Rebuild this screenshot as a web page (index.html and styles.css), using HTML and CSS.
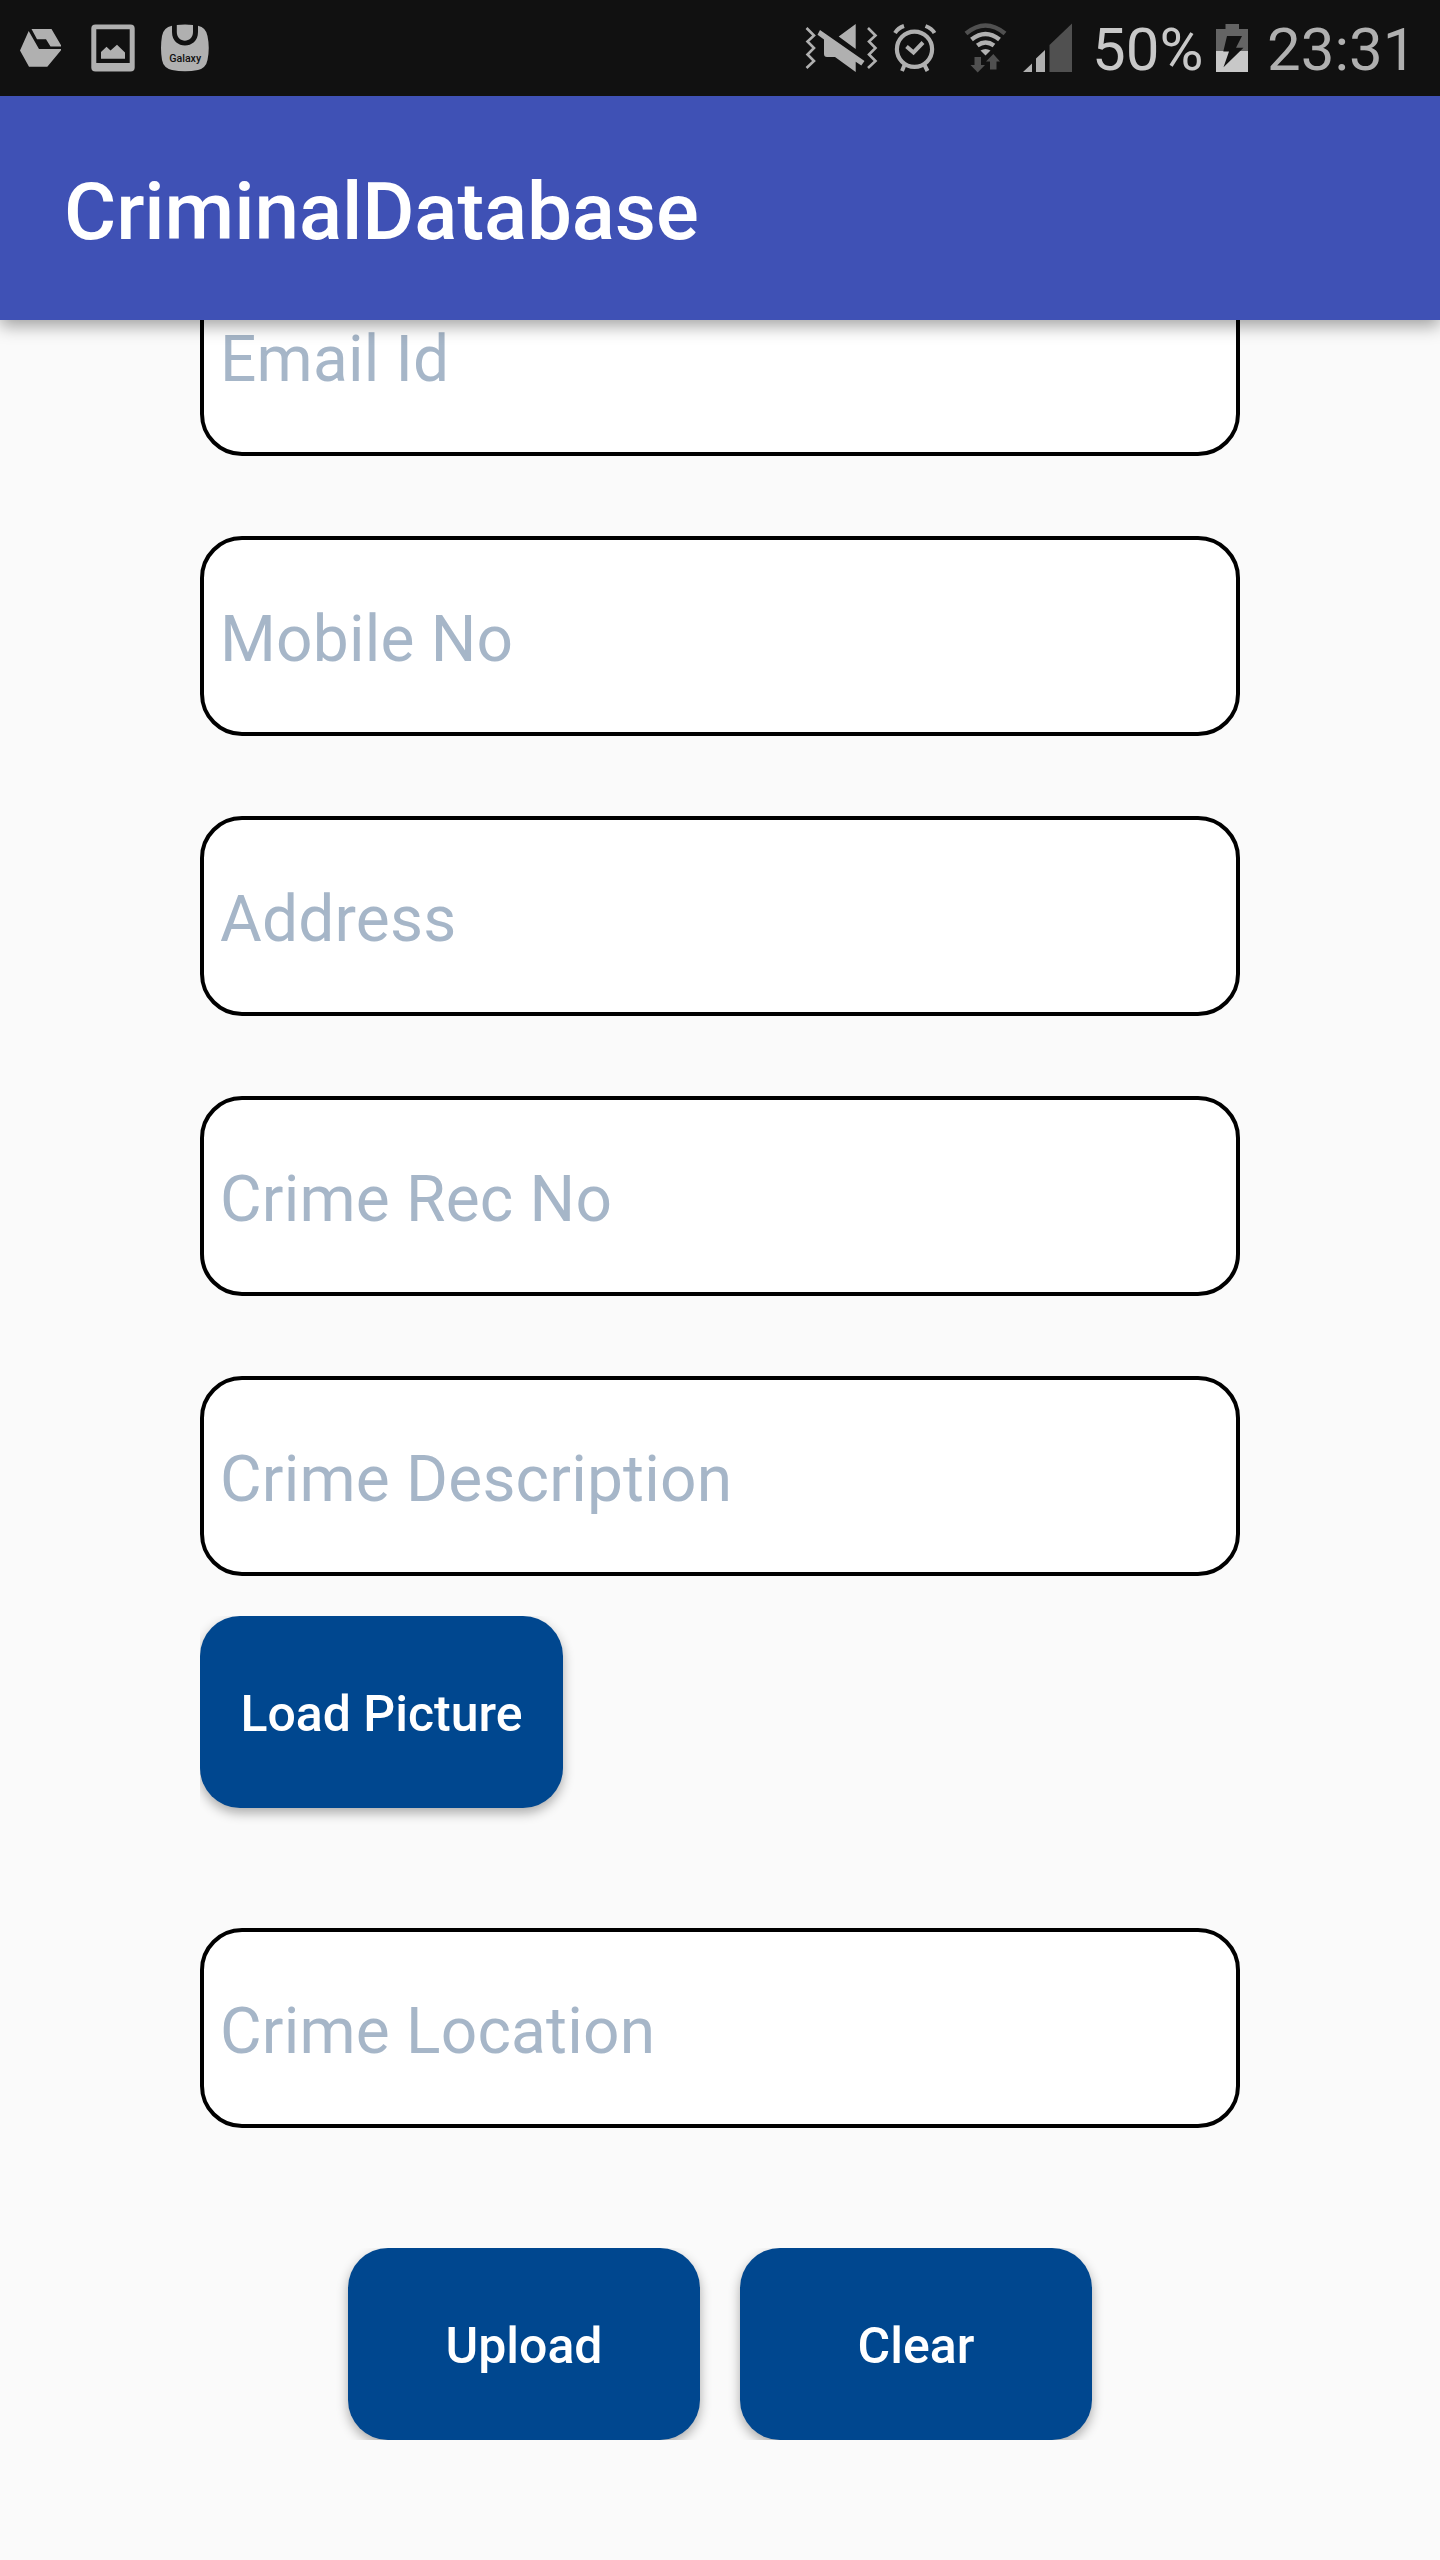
FILE: index.html
```html
<!DOCTYPE html>
<html lang="en">
<head>
<meta charset="utf-8">
<title>CriminalDatabase</title>
<link rel="stylesheet" href="styles.css">
</head>
<body>
<div class="screen">
  <header class="status-bar">
    <div class="notifications">
      <svg width="42" height="48" viewBox="20 24 42 48"><path fill="#b0b0b0" d="M28.700 31L39 49L61 49L61 50.300L47.300 66.700L29 66.700L20 50.500ZM31.500 29L51.500 29L61 45.300V46.500H50.500L46 39.200H37Z"/></svg>
      <svg width="44" height="48" viewBox="91 24 44 48"><path fill="#b0b0b0" fill-rule="evenodd" d="M95.500 24.500H130.500Q134.700 24.500 134.700 28.500V67.500Q134.700 71.500 130.500 71.500H95.500Q91.300 71.500 91.300 67.500V28.500Q91.300 24.500 95.500 24.500ZM96.300 29.300V63H129.700V29.300ZM101 58.700V52L106.500 46.700L110.500 50.500L117 44.700L125 52.500V58.700Z"/></svg>
      <svg width="48" height="48" viewBox="161 24 48 48"><path fill="#b0b0b0" d="M172 25.800V32C172 50 198 50 198 32V25.800Q206 27.500 207.500 36Q210 48 207.500 60Q206 68 198 70Q185 72.500 172 70Q163.500 68 162 60Q160 48 162 36Q163.500 27.500 172 25.800ZM176.800 25Q185 23.800 193 25V32C193 43.500 176.800 43.500 176.800 32Z"/><text class="galaxy" x="185.200" y="61.500" text-anchor="middle" textLength="32" lengthAdjust="spacingAndGlyphs">Galaxy</text></svg>
    </div>
    <div class="indicators">
      <svg width="74" height="48" viewBox="804 24 74 48"><path fill="none" stroke="#b0b0b0" stroke-width="2.600" d="M806.500 28L814 35.500L807.500 41.500L814 48L807.500 54.500L814 61L806.500 68M868 28L875.500 35.500L869 41.500L875.500 48L869 54.500L875.500 61L868 68"/><path fill="#b0b0b0" d="M855.700 24V49L838.700 36.500ZM820 30L864.500 61L861.300 65.500L855.700 61.700V72L835 57H827Q824 57 824 54V39.500L817.500 34.700Z"/></svg>
      <svg class="alarm" width="44" height="48" viewBox="893 24 44 48"><g fill="none" stroke="#b0b0b0"><circle cx="914.500" cy="49.300" r="17.600" stroke-width="4.200"/><path stroke-width="4" d="M906.500 46.500L913.500 52.500L923 42.500M895 33Q898 28 904 26M925.500 26Q932 28.500 934.500 33M904.500 65L902 71M924.500 65L927.500 71"/></g></svg>
      <svg class="wifi" width="44" height="50" viewBox="964 23 44 50"><g fill="none" stroke-width="4.500"><path stroke="#505050" d="M966 33.500Q985.500 17.500 1005 33.500"/><path stroke="#b0b0b0" d="M971.500 39.500Q985.500 28.500 999.500 39.500M977.300 45.500Q985.500 39.500 994 45.500"/></g><path fill="#b0b0b0" d="M985.500 55.500L980.500 50.500Q985.500 47.500 990.500 50.500Z"/><path fill="#505050" d="M974.500 57H981V65H985L977.700 72.500L970.500 65H974.500ZM990 69.500V61.500H986L993.300 54L1000 61.500H996.500V69.500Z"/></svg>
      <svg class="signal" width="50" height="50" viewBox="1023 23 50 50"><path fill="#b0b0b0" d="M1023 72L1032 63.500V72ZM1036 72V58.500L1045 50V72Z"/><path fill="#505050" d="M1049.500 72V45L1072 23.500V72Z"/></svg>
      <span class="percent">50%</span>
      <svg class="battery" width="32" height="48" viewBox="1216 24 32 48"><path fill="#646464" d="M1216 29H1225.500V24H1239V29H1248V51H1216Z"/><path fill="#c8c8c8" d="M1216 51H1248V72H1216Z"/><path fill="#111" d="M1227 36H1242L1236 47.700H1243.500L1223.500 67.300L1229 51.500H1223.300Z"/></svg>
      <span class="clock">23:31</span>
    </div>
  </header>
  <div class="app-bar"><h1 class="title">CriminalDatabase</h1></div>
  <main class="form">
    <input class="field" type="text" placeholder="Email Id">
    <input class="field" type="text" placeholder="Mobile No">
    <input class="field" type="text" placeholder="Address">
    <input class="field" type="text" placeholder="Crime Rec No">
    <input class="field" type="text" placeholder="Crime Description">
    <div class="picture-row"><button class="button load">Load Picture</button></div>
    <input class="field" type="text" placeholder="Crime Location">
    <div class="actions">
      <button class="button">Upload</button>
      <button class="button">Clear</button>
    </div>
  </main>
</div>
</body>
</html>
```
FILE: styles.css
```css
* { box-sizing: border-box; }

body {
  margin: 0;
  background: #fafafa;
  font-family: Roboto, "Liberation Sans", sans-serif;
}

.screen {
  width: 1440px;
  height: 2560px;
  display: flex;
  flex-direction: column;
  overflow: hidden;
}

.status-bar {
  flex: none;
  height: 96px;
  padding: 0 20px;
  display: flex;
  justify-content: space-between;
  align-items: center;
  background: #111;
  position: relative;
  z-index: 2;
}

.status-bar svg { display: block; flex: none; }

.notifications {
  display: flex;
  gap: 28px;
}

.notifications svg:first-child { margin-right: 1px; }
.notifications svg:last-child { margin-left: -2px; }

.galaxy {
  font: 500 10px Roboto, sans-serif;
  fill: #111;
}

.indicators {
  display: flex;
  align-items: center;
  width: 616px;
  font-size: 60px;
  line-height: 96px;
  color: #b0b0b0;
}

.alarm { margin-left: 15px; }
.wifi { margin-left: 27px; }
.signal { margin-left: 15px; }

.percent {
  flex: none;
  width: 124px;
  margin-left: 19px;
  padding-top: 4px;
  color: #c8c8c8;
}

.clock {
  flex: none;
  margin-left: 19px;
  padding-top: 4px;
}

.app-bar {
  flex: none;
  height: 224px;
  padding: 7px 64px 0;
  display: flex;
  align-items: center;
  background: #3f51b5;
  box-shadow: 0 6px 16px rgba(0, 0, 0, 0.36);
  position: relative;
  z-index: 1;
}

.title {
  margin: 0;
  font-size: 80px;
  font-weight: 500;
  letter-spacing: -0.1px;
  color: #fff;
}

.form {
  width: 1040px;
  margin: -64px auto 0;
  display: flex;
  flex-direction: column;
}

.field {
  flex: none;
  width: 100%;
  height: 200px;
  margin: 0 0 80px;
  padding: 6px 16px 0;
  border: 4px solid #000;
  border-radius: 42px;
  background: #fff;
  font: 400 64px Roboto, sans-serif;
  letter-spacing: 0.2px;
}

.field::placeholder {
  color: #a6b6c8;
  opacity: 1;
}

.picture-row {
  height: 312px;
  margin-top: -40px;
  overflow: hidden;
}

.button {
  width: 352px;
  height: 192px;
  padding: 4px 0 0;
  border: 0;
  border-radius: 40px;
  background: #00478f;
  box-shadow: 0 5px 12px rgba(0, 0, 0, 0.32);
  font: 500 50px Roboto, sans-serif;
  color: #fff;
}

.load { width: 363px; }

.actions {
  height: 192px;
  margin: 40px -40px 0;
  display: flex;
  justify-content: center;
  gap: 40px;
  overflow: hidden;
}
```
